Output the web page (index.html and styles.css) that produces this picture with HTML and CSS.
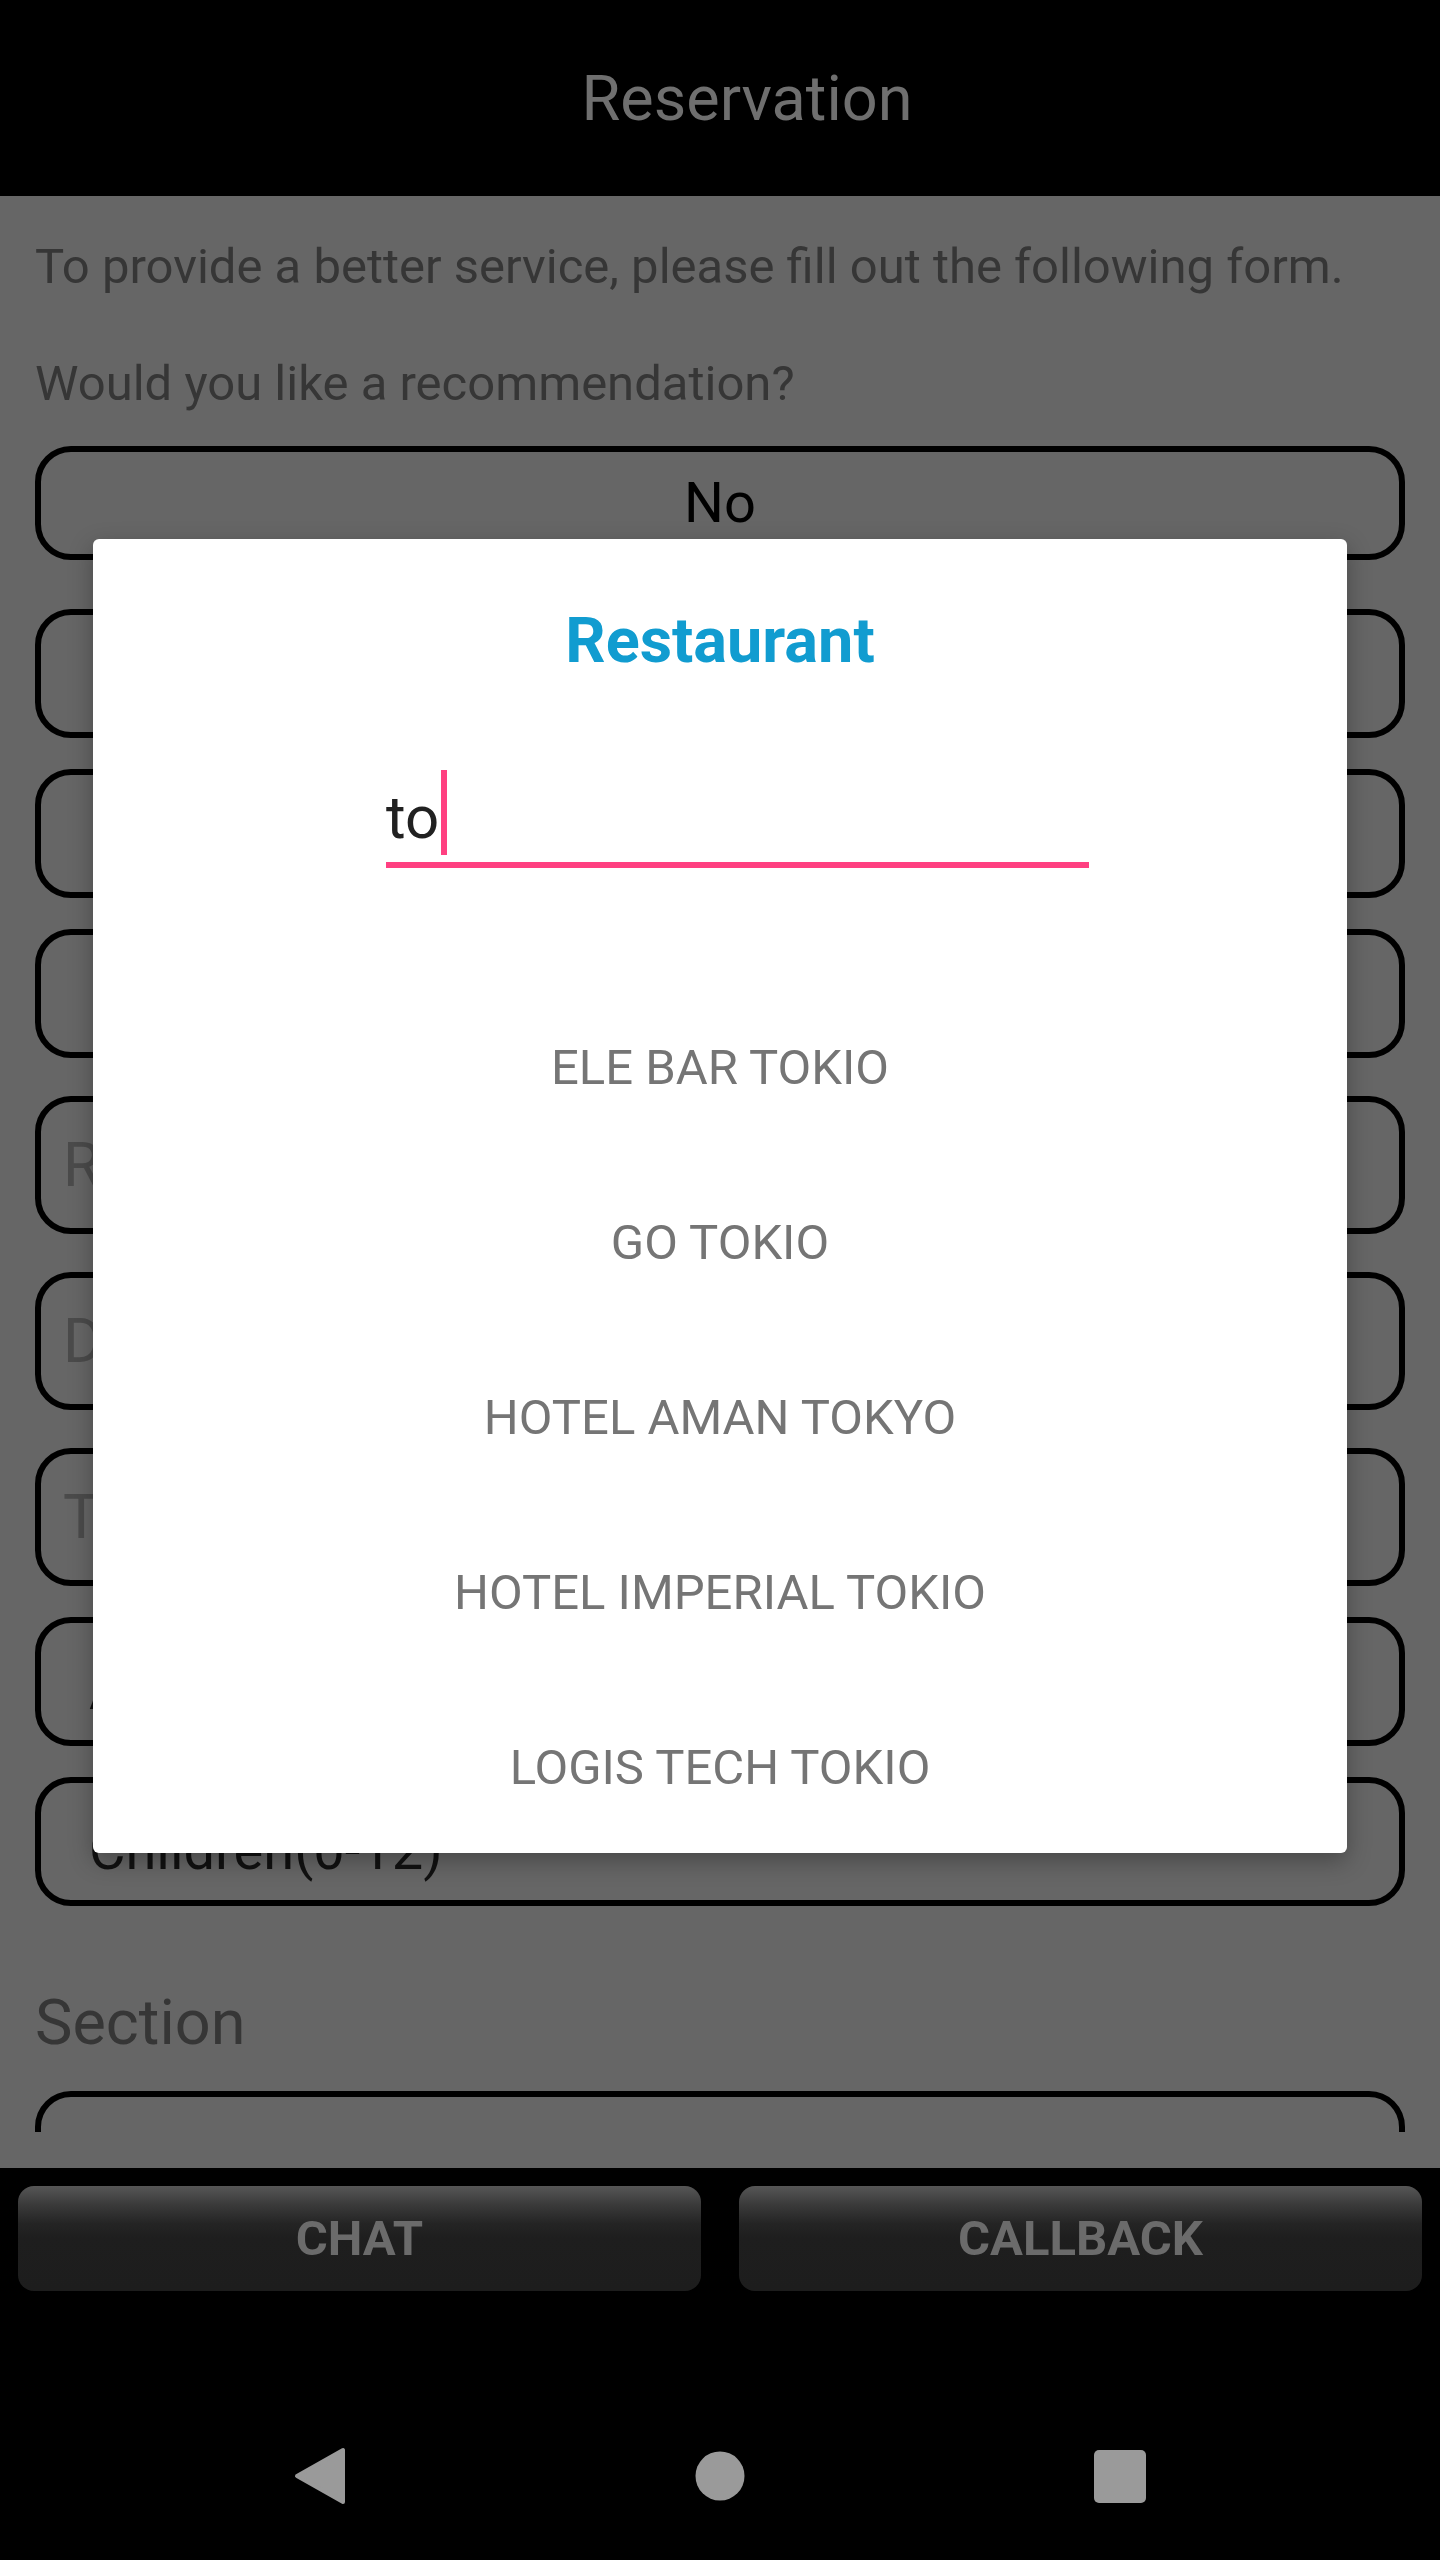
FILE: index.html
```html
<!DOCTYPE html>
<html lang="en">

<head>
    <meta charset="UTF-8">
    <meta name="viewport" content="width=device-width, initial-scale=1.0">
    <title>Reservation</title>
    <link rel="stylesheet" href="styles.css">
</head>

<body>
    <div class="screen">
        <header class="toolbar">Reservation</header>

        <main class="content">
            <div class="scroll">
                <p class="intro">To provide a better service, please fill out the following form.</p>
                <p class="question">Would you like a recommendation?</p>

                <div class="field spinner first">No</div>
                <div class="field spinner after-first"></div>
                <div class="field spinner"></div>
                <div class="field spinner"></div>

                <div class="field input tall">Restaurant</div>
                <div class="field input tall">Date</div>
                <div class="field input tall">Time</div>

                <div class="field value">Adults</div>
                <div class="field value">Children(0-12)</div>

                <p class="section">Section</p>
                <div class="field value section-field"></div>
            </div>
        </main>

        <footer class="actions">
            <button class="btn">CHAT</button>
            <button class="btn">CALLBACK</button>
        </footer>

        <nav class="navbar">
            <div class="nav-slot">
                <svg width="60" height="60" viewBox="0 0 60 60">
                    <polygon points="7,30 53,4 53,56" fill="#9a9a9a" stroke="#9a9a9a" stroke-width="4" stroke-linejoin="round"/>
                </svg>
            </div>
            <div class="nav-slot">
                <svg width="60" height="60" viewBox="0 0 60 60">
                    <circle cx="30" cy="30" r="24.5" fill="#9a9a9a"/>
                </svg>
            </div>
            <div class="nav-slot">
                <svg width="60" height="60" viewBox="0 0 60 60">
                    <rect x="4" y="4" width="52" height="53" rx="5" fill="#9a9a9a"/>
                </svg>
            </div>
        </nav>

        <!-- restaurant picker -->
        <div class="dialog">
            <h2 class="dialog-title">Restaurant</h2>
            <div class="search">
                <span class="search-text">to</span><span class="cursor"></span>
            </div>
            <ul class="results">
                <li>ELE BAR TOKIO</li>
                <li>GO TOKIO</li>
                <li>HOTEL AMAN TOKYO</li>
                <li>HOTEL IMPERIAL TOKIO</li>
                <li>LOGIS TECH TOKIO</li>
            </ul>
        </div>
    </div>
</body>

</html>
```

FILE: styles.css
```css
* {
    box-sizing: border-box;
}

body {
    margin: 0;
    background: #000;
    font-family: Roboto, "Noto Sans", sans-serif;
}

.screen {
    position: relative;
    width: 1440px;
    height: 2560px;
    overflow: hidden;
    background: #000;
}

.toolbar {
    height: 196px;
    padding: 2px 0 0 54px;
    line-height: 194px;
    text-align: center;
    font-size: 63px;
    color: #6f6f6f;
}

.content {
    height: 1972px;
    padding-bottom: 36px;
    background: #666;
}

.scroll {
    height: 1936px;
    overflow: hidden;
    padding: 0 35px;
}

.intro,
.question {
    margin: 0;
    font-size: 49px;
    line-height: normal;
    color: #363636;
}

.intro {
    padding-top: 42px;
}

.question {
    margin-top: 60px;
}

.field {
    display: flex;
    align-items: center;
    height: 129px;
    margin-top: 31px;
    border: 6px solid #000;
    border-radius: 36px;
}

.field.first {
    height: 114px;
    margin-top: 34px;
}

.field.after-first {
    margin-top: 49px;
}

.spinner {
    justify-content: center;
    font-size: 56px;
    color: #000;
}

.input {
    padding-left: 22px;
    font-size: 61px;
    color: #4b4b4b;
}

.field.tall {
    height: 138px;
    margin-top: 38px;
}

.value {
    padding: 16px 0 0 48px;
    font-size: 56px;
    color: #111;
}

.section {
    margin: 80px 0 0;
    font-size: 63px;
    line-height: normal;
    color: #363636;
}

.field.section-field {
    margin-top: 32px;
}

.actions {
    display: flex;
    gap: 38px;
    height: 224px;
    padding: 18px 18px 0;
}

.btn {
    flex: 1;
    height: 105px;
    border: none;
    border-radius: 16px;
    background: linear-gradient(#565656 0%, #3a3a3a 18%, #242424 36%, #1e1e1e 50%, #1d1d1d 100%);
    color: #6b6b6b;
    font-family: Roboto, "Noto Sans", sans-serif;
    font-size: 49px;
    font-weight: 700;
}

.navbar {
    display: flex;
    justify-content: center;
    align-items: center;
    height: 168px;
}

.nav-slot {
    display: flex;
    justify-content: center;
    width: 400px;
}

.dialog {
    position: absolute;
    left: 93px;
    top: 539px;
    width: 1254px;
    height: 1314px;
    padding-top: 65px;
    background: #fff;
    border-radius: 6px;
    box-shadow: 0 8px 24px rgba(0, 0, 0, 0.3);
}

.dialog-title {
    margin: 0;
    text-align: center;
    font-size: 63px;
    font-weight: 700;
    line-height: normal;
    color: #119cd0;
}

.search {
    width: 703px;
    margin: 93px 0 0 293px;
    padding-bottom: 7px;
    border-bottom: 6px solid #ff4081;
    font-size: 60px;
    line-height: normal;
    color: #212121;
}

.cursor {
    display: inline-block;
    width: 6px;
    height: 85px;
    margin-left: 2px;
    vertical-align: -17px;
    background: #ff4081;
}

.results {
    list-style: none;
    margin: 112px 0 0;
    padding: 0;
}

.results li {
    height: 175px;
    line-height: 175px;
    text-align: center;
    font-size: 49px;
    color: #757575;
}
```
